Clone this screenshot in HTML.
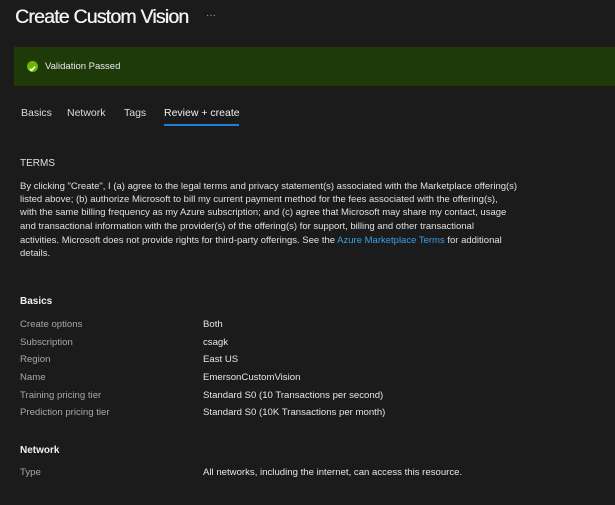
<!DOCTYPE html>
<html><head><style>
body{margin:0;width:615px;height:505px;background:#1b1b1b;font-family:"Liberation Sans",sans-serif;color:#e6e6e6;position:relative;overflow:hidden}
.a{position:absolute;white-space:nowrap}
h1{position:absolute;left:15px;top:6px;margin:0;font-size:19.5px;font-weight:normal;color:#f2f2f2;text-shadow:0.4px 0 0 #f2f2f2;letter-spacing:-0.8px}
.ban{position:absolute;left:14px;top:47px;width:601px;height:39px;background:#1e3a09}
.chk{position:absolute;left:27px;top:61px;width:11px;height:11px;border-radius:50%;background:#6bb700}
.tab{font-size:10.5px;top:107px;color:#dcdcdc}
.t{font-size:9.5px;color:#e0e0e0;left:20px}
.l{font-size:9.6px;color:#a8a8a8;left:20px}
.v{font-size:9.6px;color:#e6e6e6;left:203px}
.h{font-size:10px;font-weight:bold;left:20px;color:#f0f0f0}
</style></head><body>
<h1>Create Custom Vision</h1>
<div class="a" style="left:206px;top:10px;font-size:10px;color:#aaa">···</div>
<div class="ban"></div>
<div class="chk"><svg width="11" height="11" viewBox="0 0 11 11"><path d="M2.8 5.6l1.8 1.8 3.5-3.7" stroke="#fff" stroke-width="1.5" fill="none"/></svg></div>
<div class="a" style="left:45px;top:61px;font-size:9.5px;color:#eaeaea">Validation Passed</div>
<div class="a tab" style="left:21px">Basics</div>
<div class="a tab" style="left:67px">Network</div>
<div class="a tab" style="left:124px">Tags</div>
<div class="a tab" style="left:164px;color:#f2f2f2">Review + create</div>
<div class="a" style="left:164px;top:124px;width:75px;height:2px;background:#1f7fd4"></div>
<div class="a t" style="top:158px;font-size:10px">TERMS</div>
<div class="a t" style="top:181px">By clicking "Create", I (a) agree to the legal terms and privacy statement(s) associated with the Marketplace offering(s)</div>
<div class="a t" style="top:194px">listed above; (b) authorize Microsoft to bill my current payment method for the fees associated with the offering(s),</div>
<div class="a t" style="top:207px">with the same billing frequency as my Azure subscription; and (c) agree that Microsoft may share my contact, usage</div>
<div class="a t" style="top:221px">and transactional information with the provider(s) of the offering(s) for support, billing and other transactional</div>
<div class="a t" style="top:235px">activities. Microsoft does not provide rights for third-party offerings. See the <span style="color:#3b9ee8">Azure Marketplace Terms</span> for additional</div>
<div class="a t" style="top:248px">details.</div>
<div class="a h" style="top:296px">Basics</div>
<div class="a l" style="top:319px">Create options</div><div class="a v" style="top:319px">Both</div>
<div class="a l" style="top:337px">Subscription</div><div class="a v" style="top:337px">csagk</div>
<div class="a l" style="top:354px">Region</div><div class="a v" style="top:354px">East US</div>
<div class="a l" style="top:372px">Name</div><div class="a v" style="top:372px">EmersonCustomVision</div>
<div class="a l" style="top:390px">Training pricing tier</div><div class="a v" style="top:390px">Standard S0 (10 Transactions per second)</div>
<div class="a l" style="top:407px">Prediction pricing tier</div><div class="a v" style="top:407px">Standard S0 (10K Transactions per month)</div>
<div class="a h" style="top:445px">Network</div>
<div class="a l" style="top:467px">Type</div><div class="a v" style="top:467px">All networks, including the internet, can access this resource.</div>
</body></html>
